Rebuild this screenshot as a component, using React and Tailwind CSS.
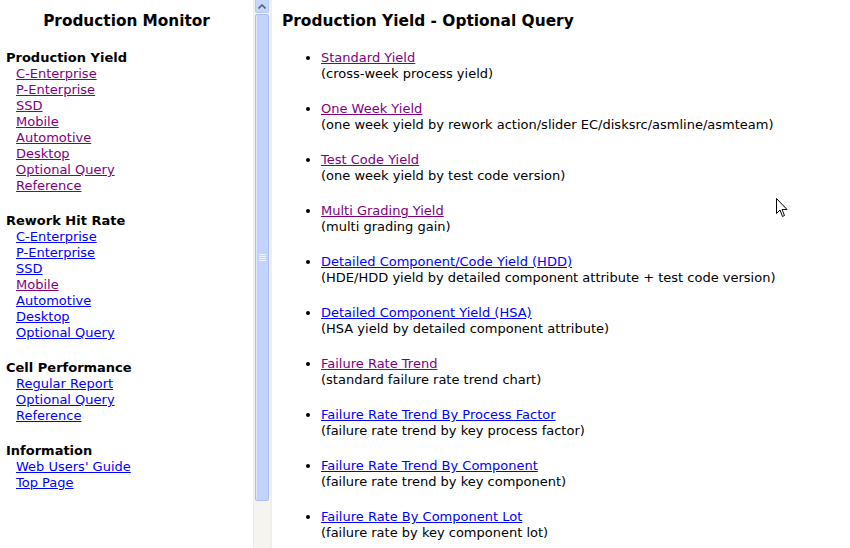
import React from "react";

const VISITED = "text-[#800080]";
const UNVISITED = "text-[#0000ff]";

const MENU = [
  {
    title: "Production Yield",
    links: [
      ["C-Enterprise", true],
      ["P-Enterprise", true],
      ["SSD", true],
      ["Mobile", true],
      ["Automotive", true],
      ["Desktop", true],
      ["Optional Query", true],
      ["Reference", true],
    ],
  },
  {
    title: "Rework Hit Rate",
    links: [
      ["C-Enterprise", false],
      ["P-Enterprise", false],
      ["SSD", false],
      ["Mobile", true],
      ["Automotive", false],
      ["Desktop", false],
      ["Optional Query", false],
    ],
  },
  {
    title: "Cell Performance",
    links: [
      ["Regular Report", false],
      ["Optional Query", false],
      ["Reference", false],
    ],
  },
  {
    title: "Information",
    links: [
      ["Web Users' Guide", false],
      ["Top Page", false],
    ],
  },
];

const ITEMS = [
  ["Standard Yield", "(cross-week process yield)", true],
  ["One Week Yield", "(one week yield by rework action/slider EC/disksrc/asmline/asmteam)", true],
  ["Test Code Yield", "(one week yield by test code version)", true],
  ["Multi Grading Yield", "(multi grading gain)", true],
  ["Detailed Component/Code Yield (HDD)", "(HDE/HDD yield by detailed component attribute + test code version)", false],
  ["Detailed Component Yield (HSA)", "(HSA yield by detailed component attribute)", false],
  ["Failure Rate Trend", "(standard failure rate trend chart)", true],
  ["Failure Rate Trend By Process Factor", "(failure rate trend by key process factor)", false],
  ["Failure Rate Trend By Component", "(failure rate trend by key component)", false],
  ["Failure Rate By Component Lot", "(failure rate by key component lot)", false],
];

function Scrollbar() {
  return (
    <div className="w-[17px] shrink-0 bg-[#f5f4ee] flex flex-col border-l border-[#eeede5]">
      <div className="h-[13px] mx-px bg-[#c8d6fb] border border-[#b4c6f5] border-t-0 rounded-b-[2px] flex items-center justify-center">
        <svg width="8" height="5" viewBox="0 0 8 5">
          <path d="M0.5 4.5 L4 1 L7.5 4.5" fill="none" stroke="#4d6185" strokeWidth="1.6" />
        </svg>
      </div>
      <div className="h-[487px] mt-px mx-px bg-[#c4d3fb] border border-[#a9bdf0] rounded-[2px] flex items-center justify-center shadow-[inset_1px_0_0_#dbe5fd]">
        <div className="flex flex-col gap-px">
          <div className="w-[7px] h-px bg-[#eef3ff]" />
          <div className="w-[7px] h-px bg-[#eef3ff]" />
          <div className="w-[7px] h-px bg-[#eef3ff]" />
          <div className="w-[7px] h-px bg-[#eef3ff]" />
        </div>
      </div>
    </div>
  );
}

export default function App() {
  return (
    <div className="relative flex h-[548px] w-[850px] overflow-hidden bg-white text-black font-['DejaVu_Sans',Verdana,sans-serif] text-[13px] leading-[16px]">
      {/* Left menu frame */}
      <div className="w-[253px] shrink-0 pl-[6px]">
        <h1 className="font-bold text-[15.3px] leading-[20px] text-center pt-[11px] pr-[6px]">
          Production Monitor
        </h1>
        <div className="mt-[19px]">
          {MENU.map((section, i) => (
            <div key={section.title} className={i > 0 ? "mt-[19px]" : ""}>
              <div className="font-bold">{section.title}</div>
              {section.links.map(([label, visited]) => (
                <div key={label} className="pl-[10px]">
                  <a href="#" className={`underline ${visited ? VISITED : UNVISITED}`}>
                    {label}
                  </a>
                </div>
              ))}
            </div>
          ))}
        </div>
      </div>
      <Scrollbar />
      <div className="w-[2px] shrink-0 bg-[#f0efe8]" />

      {/* Right content frame */}
      <div className="flex-1 pl-[10px]">
        <h2 className="font-bold text-[15.4px] leading-[20px] pt-[11px]">
          Production Yield - Optional Query
        </h2>
        <ul className="mt-[19px] pl-[39px] list-disc">
          {ITEMS.map(([label, desc, visited], i) => (
            <li key={label} className={i > 0 ? "mt-[19px]" : ""}>
              <a href="#" className={`underline ${visited ? VISITED : UNVISITED}`}>
                {label}
              </a>
              <br />
              {desc}
            </li>
          ))}
        </ul>
      </div>

      {/* mouse pointer */}
      <svg className="absolute left-[776px] top-[198px]" width="12" height="20" viewBox="0 0 12 20">
        <path d="M0.5 0.5 L0.5 15.5 L4 12 L6.5 18.5 L8.5 17.5 L6 11.5 L11 11.5 Z" fill="#fff" stroke="#000" strokeWidth="1" />
      </svg>
    </div>
  );
}
